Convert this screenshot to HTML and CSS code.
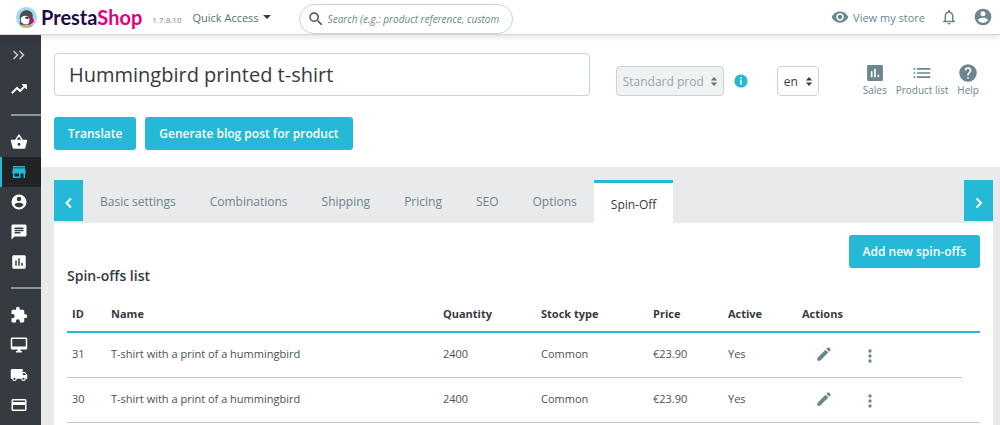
FILE: index.html
```html
<!DOCTYPE html>
<html lang="en">
<head>
<meta charset="utf-8">
<title>Hummingbird printed t-shirt • PrestaShop</title>
<link rel="stylesheet" href="styles.css">
</head>
<body>
<header class="topbar">
  <a class="logo" href="#">
    <svg class="logo-mark" viewBox="0 0 40 40" aria-hidden="true">
      <circle cx="20" cy="20" r="20" fill="#a4dbe8"/>
      <path d="M7 33C9 29 7 23 7 19C8 10 14 6 20 6C27 6 32 11 32 17L30 32C27 36 13 37 7 33Z" fill="#4b4d55"/>
      <path d="M9 24C9 18 15 16 20 17C27 18 28 29 22 33C14 34 9 30 9 24Z" fill="#fff"/>
      <path d="M17 20C19 18 23 18 25 21L22 23L18 22Z" fill="#34353c"/>
      <path d="M27 20C32 19 35 23 34 28L31 31L29 28L25 28Z" fill="#df0067"/>
      <path d="M8 34H32V36C26 41 14 41 8 36Z" fill="#c8ae8b"/>
    </svg>
    <span class="wordmark">Presta<span class="wordmark-accent">Shop</span></span>
  </a>
  <span class="version">1.7.8.10</span>
  <button class="quick-access" type="button">Quick Access <span class="caret"></span></button>
  <form class="search">
    <svg class="icon-18" viewBox="0 0 24 24" aria-hidden="true"><path fill="#45545a" d="M15.500 14h-.79l-.28-.27A6.470 6.470 0 0 0 16 9.500 6.500 6.500 0 1 0 9.500 16c1.610 0 3.090-.59 4.230-1.570l.27.28v.79l5 4.990L20.490 19l-4.990-5zm-6 0C7.010 14 5 11.990 5 9.500S7.010 5 9.500 5 14 7.010 14 9.500 11.990 14 9.500 14z"/></svg>
    <input class="search-input" type="text" aria-label="Search" placeholder="Search (e.g.: product reference, customer name…)">
  </form>
  <nav class="account">
    <a class="store-link" href="#">
      <svg class="icon-18" viewBox="0 0 24 24" aria-hidden="true"><path d="M12 4.500C7 4.500 2.730 7.610 1 12c1.730 4.390 6 7.500 11 7.500s9.270-3.110 11-7.500c-1.730-4.390-6-7.500-11-7.500zM12 17c-2.760 0-5-2.240-5-5s2.240-5 5-5 5 2.240 5 5-2.240 5-5 5zm0-8c-1.660 0-3 1.340-3 3s1.340 3 3 3 3-1.340 3-3-1.340-3-3-3z"/></svg>
      View my store
    </a>
    <button class="icon-button" type="button" aria-label="Notifications">
      <svg class="icon-18" viewBox="0 0 24 24" aria-hidden="true"><path d="M12 22c1.100 0 2-.9 2-2h-4c0 1.100.9 2 2 2zm6-6v-5c0-3.070-1.630-5.640-4.500-6.320V4c0-.83-.67-1.500-1.500-1.500s-1.500.67-1.500 1.500v.68C7.640 5.360 6 7.920 6 11v5l-2 2v1h16v-1l-2-2zm-2 1H8v-6c0-2.480 1.510-4.500 4-4.500s4 2.020 4 4.500v6z"/></svg>
    </button>
    <button class="icon-button" type="button" aria-label="Account">
      <svg class="icon-20" viewBox="0 0 24 24" aria-hidden="true"><path d="M12 2a10 10 0 1 0 0 20 10 10 0 0 0 0-20zm0 3a3 3 0 1 1 0 6 3 3 0 0 1 0-6zm0 14.200a7.200 7.200 0 0 1-6-3.220c.03-1.990 4-3.080 6-3.080s5.970 1.090 6 3.080a7.200 7.200 0 0 1-6 3.220z"/></svg>
    </button>
  </nav>
</header>

<div class="shell">
  <nav class="sidebar" aria-label="Main menu">
    <button class="side-item side-toggle" type="button" aria-label="Expand menu"><svg class="icon-18" viewBox="0 0 24 24" aria-hidden="true"><path d="M4 7.400L5.400 6l6 6-6 6L4 16.600 8.600 12zM12 7.400L13.400 6l6 6-6 6-1.400-1.400 4.600-4.600z"/></svg></button>
    <a class="side-item" href="#" aria-label="Dashboard"><svg class="icon-18" viewBox="0 0 24 24" aria-hidden="true"><path d="M16 6l2.290 2.290-4.880 4.880-4-4L2 16.590 3.410 18l6-6 4 4 6.300-6.290L22 12V6z" stroke="#fff"/></svg></a>
    <hr class="side-rule">
    <a class="side-item" href="#" aria-label="Orders"><svg class="icon-18" viewBox="0 0 24 24" aria-hidden="true"><path d="M17.210 9l-4.380-6.560a1 1 0 0 0-1.660 0L6.790 9H2c-.55 0-1 .45-1 1l.04.27 2.540 9.270A2 2 0 0 0 5.500 21h13c.92 0 1.690-.62 1.930-1.460l2.540-9.270L23 10c0-.55-.45-1-1-1h-4.790zM9 9l3-4.400L15 9H9zm3 8a2 2 0 1 1 0-4 2 2 0 0 1 0 4z"/></svg></a>
    <a class="side-item side-active" href="#" aria-label="Catalog"><svg class="icon-18" viewBox="0 0 24 24" aria-hidden="true"><path d="M20 4H4v2h16V4zm1 10v-2l-1-5H4l-1 5v2h1v6h10v-6h4v6h2v-6h1zm-9 4H6v-4h6v4z"/></svg></a>
    <a class="side-item" href="#" aria-label="Customers"><svg class="icon-18" viewBox="0 0 24 24" aria-hidden="true"><path d="M12 2a10 10 0 1 0 0 20 10 10 0 0 0 0-20zm0 3a3 3 0 1 1 0 6 3 3 0 0 1 0-6zm0 14.200a7.200 7.200 0 0 1-6-3.220c.03-1.990 4-3.080 6-3.080s5.970 1.090 6 3.080a7.200 7.200 0 0 1-6 3.220z"/></svg></a>
    <a class="side-item" href="#" aria-label="Customer service"><svg class="icon-18" viewBox="0 0 24 24" aria-hidden="true"><path d="M20 2H4c-1.100 0-2 .9-2 2v18l4-4h14c1.100 0 2-.9 2-2V4c0-1.100-.9-2-2-2zM6 9h12v2H6V9zm8 5H6v-2h8v2zm4-6H6V6h12v2z"/></svg></a>
    <a class="side-item" href="#" aria-label="Stats"><svg class="icon-18" viewBox="0 0 24 24" aria-hidden="true"><path d="M19 3H5c-1.100 0-2 .9-2 2v14c0 1.100.9 2 2 2h14c1.100 0 2-.9 2-2V5c0-1.100-.9-2-2-2zM9 17H7v-7h2v7zm4 0h-2V7h2v10zm4 0h-2v-4h2v4z"/></svg></a>
    <hr class="side-rule">
    <a class="side-item" href="#" aria-label="Modules"><svg class="icon-18" viewBox="0 0 24 24" aria-hidden="true"><path d="M20.500 11H19V7c0-1.100-.9-2-2-2h-4V3.500a2.500 2.500 0 0 0-5 0V5H4c-1.100 0-2 .9-2 2v3.800h1.500a2.700 2.700 0 0 1 0 5.400H2V20c0 1.100.9 2 2 2h3.800v-1.500a2.700 2.700 0 0 1 5.400 0V22H17c1.100 0 2-.9 2-2v-4h1.500a2.500 2.500 0 0 0 0-5z"/></svg></a>
    <a class="side-item" href="#" aria-label="Design"><svg class="icon-18" viewBox="0 0 24 24" aria-hidden="true"><path d="M21 2H3c-1.100 0-2 .9-2 2v12c0 1.100.9 2 2 2h7v2H8v2h8v-2h-2v-2h7c1.100 0 2-.9 2-2V4c0-1.100-.9-2-2-2zm0 12H3V4h18v10z"/></svg></a>
    <a class="side-item" href="#" aria-label="Shipping"><svg class="icon-18" viewBox="0 0 24 24" aria-hidden="true"><path d="M20 8h-3V4H3c-1.100 0-2 .9-2 2v11h2a3 3 0 0 0 6 0h6a3 3 0 0 0 6 0h2v-5l-3-4zM6 18.500a1.500 1.500 0 1 1 0-3 1.500 1.500 0 0 1 0 3zm13.500-9l1.960 2.500H17V9.500h2.500zm-1.500 9a1.500 1.500 0 1 1 0-3 1.500 1.500 0 0 1 0 3z"/></svg></a>
    <a class="side-item" href="#" aria-label="Payment"><svg class="icon-18" viewBox="0 0 24 24" aria-hidden="true"><path d="M20 4H4c-1.110 0-1.990.89-1.990 2L2 18c0 1.110.89 2 2 2h16c1.110 0 2-.89 2-2V6c0-1.110-.89-2-2-2zm0 14H4v-6h16v6zm0-10H4V6h16v2z"/></svg></a>
  </nav>

  <main class="main">
    <section class="product-head">
      <div class="title-row">
        <input class="title-input" type="text" aria-label="Product name" value="Hummingbird printed t-shirt">
        <div class="type-group">
          <div class="select-box select-type">
            <select class="select" aria-label="Product type" disabled><option>Standard product</option></select>
            <svg class="select-arrows" viewBox="0 0 8 10" aria-hidden="true"><path d="M4 0l3.500 4h-7zM4 10l3.500-4h-7z"/></svg>
          </div>
          <svg class="info" viewBox="0 0 14 14" role="img" aria-label="Information"><circle cx="7" cy="7" r="6.600" fill="#25b9d7"/><path d="M6.200 3.300h1.600v1.500H6.200zM6.200 5.800h1.600v4.600H6.200z" fill="#fff"/></svg>
        </div>
        <div class="select-box select-lang">
          <select class="select" aria-label="Language"><option>en</option></select>
          <svg class="select-arrows" viewBox="0 0 8 10" aria-hidden="true"><path d="M4 0l3.500 4h-7zM4 10l3.500-4h-7z"/></svg>
        </div>
        <nav class="tools">
          <a class="tool" href="#"><svg class="icon-20" viewBox="0 0 24 24" aria-hidden="true"><path d="M20 2.500H4A1.500 1.500 0 0 0 2.500 4v16A1.500 1.500 0 0 0 4 21.500h16a1.500 1.500 0 0 0 1.500-1.500V4A1.500 1.500 0 0 0 20 2.500zM9 17H7v-7h2v7zm4 0h-2V7h2v10zm4 0h-2v-3h2v3z"/></svg>Sales</a>
          <a class="tool" href="#"><svg class="icon-20" viewBox="0 0 24 24" aria-hidden="true"><path d="M2 6h2v2H2zM2 11h2v2H2zM2 16h2v2H2zM6 6h16v2H6zM6 11h16v2H6zM6 16h16v2H6z"/></svg>Product list</a>
          <a class="tool" href="#"><svg class="icon-20" viewBox="0 0 24 24" aria-hidden="true"><path d="M12 1.500a10.500 10.500 0 1 0 0 21 10.500 10.500 0 0 0 0-21zM13 19h-2v-2h2v2zm2.070-7.750l-.9.920C13.450 12.900 13 13.500 13 15h-2v-.5c0-1.100.45-2.100 1.170-2.830l1.240-1.260A2 2 0 1 0 10 9H8a4 4 0 1 1 8 0c0 .88-.36 1.680-.93 2.250z"/></svg>Help</a>
        </nav>
      </div>
      <div class="button-row">
        <button class="button" type="button">Translate</button>
        <button class="button" type="button">Generate blog post for product</button>
      </div>
    </section>

    <section class="workspace">
      <div class="tabbar">
        <button class="tab-arrow" type="button" aria-label="Previous tabs"><svg class="chevron" viewBox="0 0 8 12" aria-hidden="true"><path d="M6 1.500L1.500 6L6 10.500"/></svg></button>
        <nav class="tabs">
          <a class="tab" href="#">Basic settings</a>
          <a class="tab" href="#">Combinations</a>
          <a class="tab" href="#">Shipping</a>
          <a class="tab" href="#">Pricing</a>
          <a class="tab" href="#">SEO</a>
          <a class="tab" href="#">Options</a>
          <a class="tab tab-active" href="#" aria-current="page">Spin-Off</a>
        </nav>
        <button class="tab-arrow" type="button" aria-label="Next tabs"><svg class="chevron" viewBox="0 0 8 12" aria-hidden="true"><path d="M1.500 1.500L6 6l-4.500 4.500"/></svg></button>
      </div>
      <div class="panel">
        <div class="panel-actions"><button class="button" type="button">Add new spin-offs</button></div>
        <h2 class="panel-title">Spin-offs list</h2>
        <table class="grid">
          <colgroup><col class="col-id"><col><col class="col-quantity"><col class="col-stock"><col class="col-price"><col class="col-active"><col class="col-actions"><col class="col-end"></colgroup>
          <thead>
            <tr><th>ID</th><th>Name</th><th>Quantity</th><th>Stock type</th><th>Price</th><th>Active</th><th colspan="2">Actions</th></tr>
          </thead>
          <tbody>
            <tr>
              <td>31</td><td>T-shirt with a print of a hummingbird</td><td>2400</td><td>Common</td><td>€23.90</td><td>Yes</td>
              <td><div class="row-actions">
                <button class="icon-button" type="button" aria-label="Edit"><svg class="icon-18" viewBox="0 0 24 24" aria-hidden="true"><path d="M3 17.250V21h3.750L17.810 9.940l-3.750-3.750L3 17.250zM20.710 7.040a1 1 0 0 0 0-1.410l-2.340-2.340a1 1 0 0 0-1.410 0l-1.830 1.830 3.750 3.750 1.830-1.830z"/></svg></button>
                <button class="icon-button more" type="button" aria-label="More actions"><svg class="icon-20" viewBox="0 0 24 24" aria-hidden="true"><circle cx="12" cy="6" r="2"/><circle cx="12" cy="12" r="2"/><circle cx="12" cy="18" r="2"/></svg></button>
              </div></td>
            </tr>
            <tr>
              <td>30</td><td>T-shirt with a print of a hummingbird</td><td>2400</td><td>Common</td><td>€23.90</td><td>Yes</td>
              <td colspan="2"><div class="row-actions">
                <button class="icon-button" type="button" aria-label="Edit"><svg class="icon-18" viewBox="0 0 24 24" aria-hidden="true"><path d="M3 17.250V21h3.750L17.810 9.940l-3.750-3.750L3 17.250zM20.710 7.040a1 1 0 0 0 0-1.410l-2.340-2.340a1 1 0 0 0-1.410 0l-1.830 1.830 3.750 3.750 1.830-1.830z"/></svg></button>
                <button class="icon-button more" type="button" aria-label="More actions"><svg class="icon-20" viewBox="0 0 24 24" aria-hidden="true"><circle cx="12" cy="6" r="2"/><circle cx="12" cy="12" r="2"/><circle cx="12" cy="18" r="2"/></svg></button>
              </div></td>
            </tr>
          </tbody>
        </table>
      </div>
    </section>
  </main>
</div>
</body>
</html>
```

FILE: styles.css
```css
* {
  box-sizing: border-box;
}

body {
  margin: 0;
  min-height: 100vh;
  display: flex;
  flex-direction: column;
  background: #fff;
  color: #363a41;
  font-family: "Open Sans", "Noto Sans", sans-serif;
  font-size: 12px;
}

button, input, select {
  font: inherit;
  color: inherit;
  margin: 0;
}

a {
  color: inherit;
  text-decoration: none;
}

svg {
  display: block;
  flex: none;
  fill: currentColor;
}

.icon-18 {
  width: 18px;
  height: 18px;
}

.icon-20 {
  width: 20px;
  height: 20px;
}

.icon-button {
  display: flex;
  padding: 0;
  border: 0;
  background: none;
  color: #6c868e;
}

/* Top bar */
.topbar {
  display: flex;
  align-items: center;
  height: 35px;
  padding: 0 7px 0 16px;
  border-bottom: 1px solid #d5d7d8;
  box-shadow: 0 2px 6px rgba(0, 0, 0, 0.12);
  position: relative;
  z-index: 1;
}

.logo {
  display: flex;
  align-items: center;
  gap: 4px;
}

.logo-mark {
  width: 21px;
  height: 21px;
}

.wordmark {
  font-family: Lato, sans-serif;
  font-size: 20px;
  font-weight: 700;
  line-height: 24px;
  color: #1f0a4d;
}

.wordmark-accent {
  color: #e6007e;
}

.version {
  margin-left: 10px;
  padding-top: 4px;
  font-size: 8px;
  color: #6c868e;
}

.quick-access {
  display: flex;
  align-items: center;
  gap: 4px;
  margin-left: 11px;
  padding: 0;
  border: 0;
  background: none;
  color: #576c72;
  font-size: 11px;
}

.caret {
  border: 4px solid transparent;
  border-top-color: #363a41;
  border-bottom: 0;
}

.search {
  display: flex;
  align-items: center;
  gap: 3px;
  width: 214px;
  height: 30px;
  margin: 4px 0 0 28px;
  padding: 0 13px 0 7px;
  border: 1px solid #c4d5d9;
  border-radius: 15px;
  background: #fff;
}

.search-input {
  flex: 1;
  min-width: 0;
  padding: 0;
  border: 0;
  outline: 0;
  background: none;
  font-size: 10px;
}

.search-input::placeholder {
  color: #6c868e;
  font-style: italic;
}

.account {
  display: flex;
  align-items: center;
  gap: 15px;
  margin-left: auto;
  color: #6c868e;
}

.store-link {
  display: flex;
  align-items: center;
  gap: 4px;
  font-size: 11px;
}

/* Sidebar */
.shell {
  flex: 1;
  display: flex;
}

.sidebar {
  flex: none;
  width: 41px;
  background: #363a41;
  color: #fff;
}

.side-item {
  display: flex;
  align-items: center;
  width: 100%;
  height: 30px;
  padding: 0 0 0 8px;
  border: 0;
  border-left: 2px solid transparent;
  background: none;
}

.side-toggle {
  height: 39px;
  color: #bbcdd2;
}

.side-active {
  background: #202226;
  border-left-color: #25b9d7;
  color: #25b9d7;
}

.side-rule {
  height: 2px;
  margin: 10px 0 11px 11px;
  border: 0;
  background: #87959a;
}

/* Product header */
.main {
  flex: 1;
  min-width: 0;
  display: flex;
  flex-direction: column;
}

.product-head {
  padding: 18px 21px 17px 13px;
}

.title-row {
  display: flex;
  align-items: flex-end;
}

.title-input {
  flex: 1;
  min-width: 0;
  height: 43px;
  padding: 0 14px;
  border: 1px solid #c4d5d9;
  border-radius: 4px;
  background: #fff;
  font-size: 20px;
}

.type-group {
  display: flex;
  align-items: center;
  gap: 10px;
  margin-left: 26px;
}

.select-box {
  position: relative;
}

.select-type {
  width: 108px;
  color: #95a7ad;
}

.select-lang {
  width: 42px;
  margin-left: 29px;
}

.select {
  display: block;
  width: 100%;
  height: 30px;
  padding: 0 20px 0 6px;
  border: 1px solid #c4d5d9;
  border-radius: 4px;
  background: #fff;
  appearance: none;
  opacity: 1;
}

.select:disabled {
  background: #eff1f2;
}

.select-arrows {
  position: absolute;
  top: 11px;
  right: 6px;
  width: 8px;
  height: 9px;
  color: #363a41;
  pointer-events: none;
}

.select:disabled + .select-arrows {
  color: #6b6d72;
}

.info {
  width: 14px;
  height: 14px;
}

.tools {
  display: flex;
  gap: 9px;
  margin-left: 44px;
}

.tool {
  display: flex;
  flex-direction: column;
  align-items: center;
  gap: 2px;
  color: #6c868e;
  font-size: 10px;
  line-height: 11px;
}

.button-row {
  display: flex;
  gap: 9px;
  margin-top: 21px;
}

.button {
  height: 33px;
  padding: 0 14px;
  border: 0;
  border-radius: 3px;
  background: #25b9d7;
  color: #fff;
  font-weight: 600;
}

/* Tabs */
.workspace {
  flex: 1;
  display: flex;
  flex-direction: column;
  padding: 13px 7px 0 13px;
  background: #e9eaeb;
}

.tabbar {
  display: flex;
  align-items: flex-start;
}

.tab-arrow {
  display: flex;
  align-items: center;
  justify-content: center;
  flex: none;
  width: 29px;
  height: 41px;
  padding: 4px 0 0;
  border: 0;
  background: #25b9d7;
  color: #fff;
}

.chevron {
  width: 8px;
  height: 12px;
  fill: none;
  stroke: currentColor;
  stroke-width: 2;
}

.tabs {
  flex: 1;
  display: flex;
}

.tab {
  height: 43px;
  padding: 0 17px;
  line-height: 43px;
  color: #6c868e;
}

.tab-active {
  border-top: 3px solid #25b9d7;
  background: #fff;
  color: #363a41;
}

/* Spin-offs list */
.panel {
  flex: 1;
  padding: 12px 13px 0;
  background: #fff;
}

.panel-actions {
  display: flex;
  justify-content: flex-end;
}

.panel-title {
  margin: 0;
  font-size: 14px;
  font-weight: 600;
  line-height: 16px;
}

.grid {
  width: 100%;
  margin-top: 12px;
  table-layout: fixed;
  border-collapse: collapse;
  font-size: 11px;
}

.grid th, .grid td {
  padding: 0 5px;
  text-align: left;
}

.grid th {
  height: 36px;
  border-bottom: 2px solid #25b9d7;
  font-weight: 700;
}

.grid td {
  height: 45px;
  padding-bottom: 2px;
  border-bottom: 1px solid #bbcdd2;
  color: #4b5057;
}

.col-id {
  width: 39px;
}

.col-quantity {
  width: 98px;
}

.col-stock {
  width: 112px;
}

.col-price {
  width: 75px;
}

.col-active {
  width: 74px;
}

.col-actions {
  width: 165px;
}

.col-end {
  width: 18px;
}

.row-actions {
  display: flex;
  align-items: center;
  gap: 27px;
  padding-left: 13px;
}

.more {
  padding-top: 4px;
}
```
